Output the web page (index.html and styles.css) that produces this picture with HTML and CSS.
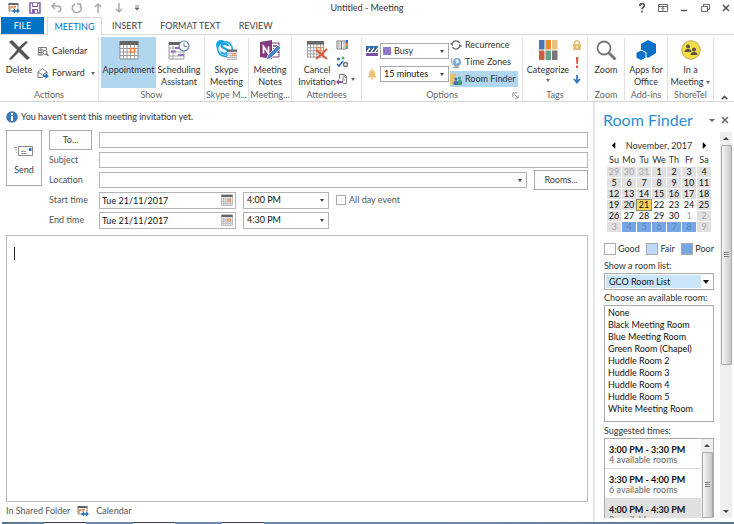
FILE: index.html
```html
<!DOCTYPE html>
<html lang="en">
<head>
<meta charset="utf-8">
<title>Untitled - Meeting</title>
<link rel="stylesheet" href="styles.css">
</head>
<body>
<svg class="defs" aria-hidden="true">
  <symbol id="cal" viewBox="0 0 20 20">
    <path d="M1 4h18v15H1z" fill="#fff" stroke="#8a8a8a"/>
    <path d="M1 8.500h18M1 12h18M1 15.500h18M4.500 4v15M8 4v15M11.500 4v15M15.500 4v15" stroke="#9a9a9a" fill="none"/>
    <path d="M.5 1h19v4H.5z" fill="#666"/>
    <path d="M11.500 8.500h4v3.500h-4z" fill="#fff" stroke="#e8833a" stroke-width="1.500"/>
  </symbol>
  <symbol id="calsync" viewBox="0 0 12 12">
    <path d="M1 2h9v7H1z" fill="#fff" stroke="#888"/>
    <path d="M.5 1h10v2H.5z" fill="#666"/>
    <path d="M2 8V5h3M6 7V4.500h2" stroke="#e8833a" stroke-width="1.300" fill="none"/>
    <path d="M4 9l3-2.500v1.700h2V6.500L12 9l-3 2.500V9.800H7v1.700z" fill="#2b72bd"/>
  </symbol>
  <symbol id="bigx" viewBox="0 0 22 20"><path d="M1 2l3-2 7 7 7-6 2 1-7 7 9 9-3 2-8-8-8 8-2-1 8-9z" fill="#555"/></symbol>
</svg>
<header class="titlebar">
  <div class="quick">
    <button aria-label="Calendar"><svg viewBox="0 0 12 12"><use href="#calsync"/></svg></button>
    <button aria-label="Save"><svg viewBox="0 0 12 12"><path d="M1 1h10v10H1z" fill="#fff" stroke="#8661b0" stroke-width="1.600"/><path d="M3 1h6v4H3zM3 7h6v4H3z" fill="#8661b0"/><path d="M4 1h4v3H4zM6 8h2v3H6z" fill="#fff"/></svg></button>
    <button aria-label="Undo"><svg viewBox="0 0 12 12"><path d="M5 1L2 4l3 3M2 4h5c5 0 5 5 1 6" fill="none" stroke="#aaa" stroke-width="1.500"/></svg></button>
    <button aria-label="Redo"><svg viewBox="0 0 12 12"><path d="M4 2a4.500 4.500 0 1 0 5 1M9.500 6V2H6" fill="none" stroke="#aaa" stroke-width="1.500"/></svg></button>
    <button aria-label="Previous"><svg viewBox="0 0 12 12"><path d="M6 11V2M3 5l3-3 3 3" fill="none" stroke="#aaa" stroke-width="1.500"/></svg></button>
    <button aria-label="Next"><svg viewBox="0 0 12 12"><path d="M6 1v9M3 7l3 3 3-3" fill="none" stroke="#aaa" stroke-width="1.500"/></svg></button>
    <button aria-label="Customize"><svg viewBox="0 0 12 12"><path d="M1 4h4M1 6h4L3 8z" fill="#666" stroke="#666" stroke-width=".8"/></svg></button>
  </div>
  <h1>Untitled - Meeting</h1>
  <div class="winbtns">
    <button aria-label="Help"><svg viewBox="0 0 12 12"><path d="M3.800 4c0-3 4.500-3 4.500-.4C8.300 5.500 6 5.300 6 7.500M6 8.800v1.700" fill="none" stroke="#555" stroke-width="1.700"/></svg></button>
    <button aria-label="Ribbon options"><svg viewBox="0 0 12 12"><path d="M1.500 2.500h9v7h-9zM1.500 4.500h9M6 9V5.500M4.500 7L6 5.500 7.500 7" fill="none" stroke="#666"/></svg></button>
    <button aria-label="Minimize"><svg viewBox="0 0 12 12"><path d="M3 8.500h6" stroke="#555" stroke-width="1.500"/></svg></button>
    <button aria-label="Restore"><svg viewBox="0 0 12 12"><path d="M2.500 4.500h6v5h-6zM4.500 4V2.500h6v5H9" fill="none" stroke="#666"/></svg></button>
    <button aria-label="Close"><svg viewBox="0 0 12 12"><path d="M3 3l6 6M9 3L3 9" stroke="#555" stroke-width="1.500"/></svg></button>
  </div>
</header>
<nav class="tabs">
  <a class="file" href="#file">FILE</a>
  <a class="active" href="#meeting">MEETING</a>
  <a class="insert" href="#insert">INSERT</a>
  <a href="#format">FORMAT TEXT</a>
  <a href="#review">REVIEW</a>
</nav>
<div class="ribbon">
  <section class="group">
    <div class="tools start">
      <button class="big"><svg viewBox="0 0 22 20"><use href="#bigx"/></svg>Delete</button>
      <div class="stack wide">
        <button class="small"><svg viewBox="0 0 12 12"><path d="M1.500 10V2.500h8V5M1.500 5h5M1.500 7.500h4M4 3v7M1 10h5" fill="none" stroke="#777"/><circle cx="8" cy="7.500" r="2" fill="#fff" stroke="#666"/><path d="M9.500 9l2 2" stroke="#666" stroke-width="1.300"/></svg>Calendar</button>
        <button class="small"><svg viewBox="0 0 12 12"><path d="M1 5l4.500-3.500L10 5v2M1 5v5.500h5M1 5l4.500 3L10 5" fill="none" stroke="#777"/><path d="M6 8h2.500V6L12 9l-3.500 3v-2H6z" fill="#2b72bd"/></svg>Forward<i class="caret push"></i></button>
      </div>
    </div>
    <h2>Actions</h2>
  </section>
  <section class="group">
    <div class="tools">
      <button class="big on"><svg viewBox="0 0 20 20"><use href="#cal"/></svg>Appointment</button>
      <button class="big even"><svg viewBox="0 0 22 20"><path d="M1 3h15v16H1z" fill="#fff" stroke="#999"/><path d="M1 2h12v3H1z" fill="#666"/><path d="M1 8h15M1 12h15M1 16h15M5 5v14" stroke="#aaa"/><path d="M7 8h6M3 11.500h5M10 15h6" stroke="#9673c8" stroke-width="2"/><circle cx="16" cy="6" r="5" fill="#fff" stroke="#6486ab" stroke-width="1.200"/><path d="M16 3v3.500h3" fill="none" stroke="#6486ab"/></svg>Scheduling<br>Assistant</button>
    </div>
    <h2>Show</h2>
  </section>
  <section class="group">
    <div class="tools">
      <button class="big"><svg viewBox="0 0 22 20"><circle cx="5" cy="5" r="5" fill="#13a4e2"/><circle cx="12" cy="13" r="5" fill="#13a4e2"/><circle cx="9" cy="9" r="8" fill="#13a4e2"/><circle cx="9" cy="9" r="6.500" fill="#fff"/><path d="M12 6c-1-3-7-2.500-6.500 0S12 8.500 12 11.500s-6 3-7 0" fill="none" stroke="#13a4e2" stroke-width="2.200"/><svg x="10" y="9" width="12" height="11" viewBox="0 0 20 20"><use href="#cal"/></svg></svg>Skype<br>Meeting</button>
    </div>
    <h2>Skype M...</h2>
  </section>
  <section class="group">
    <div class="tools">
      <button class="big"><svg viewBox="0 0 22 20"><path d="M11 3h9v14h-9z" fill="#fff" stroke="#80397b"/><path d="M14 6h6M14 9h6M14 12h6" stroke="#80397b" stroke-width="1.500"/><path d="M1 2l12-2v19L1 17z" fill="#80397b"/><path d="M4.500 13.500v-7l5 7v-7" fill="none" stroke="#fff" stroke-width="1.800"/><path d="M7 20l2-5 10-10 3 3-10 10z" fill="#4a86c5" stroke="#fff" stroke-width=".7"/></svg>Meeting<br>Notes</button>
    </div>
    <h2>Meeting...</h2>
  </section>
  <section class="group">
    <div class="tools">
      <button class="big"><svg viewBox="0 0 22 20"><svg width="19" height="18" viewBox="0 0 20 20"><use href="#cal"/></svg><path d="M10 10l11 9M21 9L10 19" stroke="#e0563a" stroke-width="2"/></svg>Cancel<br>Invitation</button>
      <div class="stack">
        <button class="small" aria-label="Address book"><svg viewBox="0 0 12 12"><path d="M1 2h4.500v8H1zM5.500 2H10v8H5.500z" fill="#fff" stroke="#777"/><path d="M2 4h2.500M2 6h2.500M2 8h2.500M7 4h2M7 6h2M7 8h2" stroke="#999"/><path d="M10 1h2v3h-2z" fill="#2b72bd"/><path d="M10 4h2v3h-2z" fill="#e8833a"/><path d="M10 7h2v3h-2z" fill="#5aa58a"/></svg></button>
        <button class="small" aria-label="Check names"><svg viewBox="0 0 12 12"><circle cx="2.500" cy="3" r="1.500" fill="#2b72bd"/><circle cx="7" cy="2" r="1.500" fill="#5aa58a"/><path d="M1 8l2 2 4-5" fill="none" stroke="#2b72bd" stroke-width="1.600"/><circle cx="9.500" cy="8.500" r="2" fill="#fff" stroke="#777" stroke-width="1.500"/></svg></button>
        <button class="small" aria-label="Response options"><svg viewBox="0 0 12 12"><path d="M3.500 6V1.500h5l2 2v7H7" fill="#fff" stroke="#777"/><path d="M8 1v3h3M6 5h2M6 7h3" fill="none" stroke="#777"/><path d="M0 9l3-3v2h4v2H3v2z" fill="#8a50a5"/></svg><i class="caret"></i></button>
      </div>
    </div>
    <h2>Attendees</h2>
  </section>
  <section class="group">
    <div class="tools options">
      <div class="stack">
        <div class="field"><svg viewBox="0 0 12 12"><path d="M0 1h12v2H0z" fill="#2b72bd"/><path d="M0 3h12v4H0z" fill="#3d5a80"/><path d="M1 7l3-4M5 7l3-4M9 7l3-4" stroke="#fff" stroke-width="1.300"/><path d="M0 8h12v3H0z" fill="#7c52a5"/></svg><span class="pick busy"><select aria-label="Show as"><option>Busy</option></select></span></div>
        <div class="field"><svg viewBox="0 0 12 12"><path d="M1 9.500l2-2V5c0-4 6-4 6 0v2.500l2 2zM5 10h2v1.500H5zM5.500 0h1v2h-1z" fill="#ecc277"/></svg><span class="pick dark"><select aria-label="Reminder"><option>15 minutes</option></select></span></div>
      </div>
      <div class="stack">
        <button class="small"><svg viewBox="0 0 12 12"><path d="M2.500 4a4 4 0 0 1 7 0M9.500 8a4 4 0 0 1-7 0" fill="none" stroke="#666" stroke-width="1.300"/><path d="M0 5l3-2v4zM12 7L9 9V5z" fill="#666"/></svg>Recurrence</button>
        <button class="small"><svg viewBox="0 0 12 12"><circle cx="7" cy="6" r="4" fill="#79a9d6"/><path d="M5 4l3-1 1 3-2 2z" fill="#e8eff5"/><path d="M2 2c-2 5 1 9 7 8M6 10v2M3 11.500h6" fill="none" stroke="#999"/></svg>Time Zones</button>
        <button class="small on"><svg viewBox="0 0 12 12"><path d="M0 1l6-1v12l-6-1z" fill="#edc06d"/><circle cx="6" cy="6" r="1.600" fill="#3a78b5"/><path d="M3.500 12V9q2.500-3 5 0v3z" fill="#3a78b5"/><circle cx="9.500" cy="5" r="1.600" fill="#4d9c80"/><path d="M8 12V8q2-3 4 0v4z" fill="#4d9c80"/></svg>Room Finder</button>
      </div>
    </div>
    <h2>Options<svg class="launch" viewBox="0 0 8 8"><path d="M1 6V1h5M3 3l3 3M7 4v3H4" fill="none" stroke="#777"/></svg></h2>
  </section>
  <section class="group">
    <div class="tools">
      <button class="big"><svg viewBox="0 0 20 20"><path d="M1 0h5.500v9.500H1z" fill="#4477b5"/><path d="M7.500 0H13v9.500H7.500z" fill="#e98733"/><path d="M14 0h5.500v9.500H14z" fill="#e9c07c"/><path d="M1 10.500h5.500V20H1z" fill="#d05a43"/><path d="M7.500 10.500H13V20H7.500z" fill="#61a48a"/><path d="M14 10.500h5.500V20H14z" fill="#777"/></svg>Categorize<i class="caret below"></i></button>
      <div class="stack gap">
        <button class="small" aria-label="Private"><svg viewBox="0 0 12 12"><path d="M3.500 5V3.500q2.500-4 5 0V5" fill="none" stroke="#e9bd72" stroke-width="1.500"/><path d="M2 5h8v6H2z" fill="#e9bd72"/><path d="M5.500 7h1v2h-1z" fill="#fff"/></svg></button>
        <button class="small" aria-label="High importance"><svg viewBox="0 0 12 12"><path d="M4.800 1h2.600L6.800 8H5.400zM5 9.500h2V12H5z" fill="#e0563a"/></svg></button>
        <button class="small" aria-label="Low importance"><svg viewBox="0 0 12 12"><path d="M6 2v7M3 6l3 3.500L9 6" fill="none" stroke="#3a78bd" stroke-width="1.800"/></svg></button>
      </div>
    </div>
    <h2>Tags</h2>
  </section>
  <section class="group">
    <div class="tools"><button class="big"><svg viewBox="0 0 20 20"><circle cx="8" cy="8" r="6.500" fill="#fff" stroke="#777" stroke-width="1.800"/><path d="M12.500 12.500l7 7" stroke="#777" stroke-width="3"/></svg>Zoom</button></div>
    <h2>Zoom</h2>
  </section>
  <section class="group">
    <div class="tools"><button class="big"><svg viewBox="0 0 20 20"><path d="M12 0l8 4v9l-8 5-7-5V4z" fill="#0b71c8"/><path d="M5 10l5 2.500V18l-5 2.500L0 18v-5.500z" fill="#0b71c8" stroke="#fff"/></svg>Apps for<br>Office</button></div>
    <h2>Add-ins</h2>
  </section>
  <section class="group">
    <div class="tools"><button class="big"><svg viewBox="0 0 20 20"><circle cx="10" cy="10" r="9.300" fill="#f3dc45" stroke="#b9a95b"/><circle cx="7" cy="6.500" r="2" fill="#594f4c"/><path d="M3.500 12q0-3 3.500-3t3.500 3z" fill="#594f4c"/><circle cx="13" cy="9.500" r="2" fill="#594f4c"/><path d="M9.500 15q0-3 3.500-3t3.500 3z" fill="#594f4c"/></svg>In a<br><span class="inline">Meeting<i class="caret"></i></span></button></div>
    <h2>ShoreTel</h2>
  </section>
  <button class="collapse" aria-label="Collapse ribbon"><svg viewBox="0 0 8 8"><path d="M1.500 5.500L4 3l2.500 2.500" fill="none" stroke="#555" stroke-width="1.400"/></svg></button>
</div>
<div class="content">
  <main class="editor">
    <p class="info"><svg viewBox="0 0 12 12"><circle cx="6" cy="6" r="5.800" fill="#3f78b5"/><path d="M5 2h2v2H5zM5 5h2v5H5z" fill="#fff"/></svg>You haven't sent this meeting invitation yet.</p>
    <form class="form">
      <button type="button" class="btn send"><svg viewBox="0 0 20 12"><path d="M4.500 1.500h14v9h-14z" fill="#fff" stroke="#888"/><path d="M0 2.500h3M1 5h2M2 7.500h1M7 6.500h5M7 8.500h6" stroke="#999"/><path d="M15 3h2.500v3H15z" fill="#2b72bd"/></svg>Send</button>
      <button type="button" class="btn to">To...</button>
      <input aria-label="To" class="box" type="text">
      <label for="subject">Subject</label>
      <input id="subject" class="box" type="text">
      <label for="location">Location</label>
      <div class="row"><span class="pick grow"><input id="location" type="text"></span><button type="button" class="btn rooms">Rooms...</button></div>
      <label for="sd">Start time</label>
      <div class="row">
        <span class="date"><input id="sd" type="text" value="Tue 21/11/2017"><svg viewBox="0 0 20 20"><use href="#cal"/></svg></span>
        <span class="pick time"><select aria-label="Start hour"><option>4:00 PM</option></select></span>
        <input id="allday" type="checkbox"><label for="allday">All day event</label>
      </div>
      <label for="ed">End time</label>
      <div class="row">
        <span class="date"><input id="ed" type="text" value="Tue 21/11/2017"><svg viewBox="0 0 20 20"><use href="#cal"/></svg></span>
        <span class="pick time"><select aria-label="End hour"><option>4:30 PM</option></select></span>
      </div>
    </form>
    <div class="message"><textarea aria-label="Message"></textarea><i class="cursor"></i></div>
    <footer>In Shared Folder<svg viewBox="0 0 12 12"><use href="#calsync"/></svg>Calendar</footer>
  </main>
  <aside class="pane">
    <div class="panehead"><h2>Room Finder</h2><i class="caret"></i><button aria-label="Close pane"><svg viewBox="0 0 8 8"><path d="M1 1l6 6M7 1L1 7" stroke="#666" stroke-width="1.500"/></svg></button></div>
    <div class="panebody">
      <div class="finder">
        <div class="month"><button aria-label="Previous month"><svg viewBox="0 0 8 8"><path d="M6 0v8L2 4z"/></svg></button><span>November, 2017</span><button aria-label="Next month"><svg viewBox="0 0 8 8"><path d="M2 0v8l4-4z"/></svg></button></div>
        <table>
          <thead><tr><th>Su</th><th>Mo</th><th>Tu</th><th>We</th><th>Th</th><th>Fr</th><th>Sa</th></tr></thead>
          <tbody>
            <tr class="past"><td class="out">29</td><td class="out">30</td><td class="out">31</td><td>1</td><td>2</td><td>3</td><td>4</td></tr>
            <tr class="past"><td>5</td><td>6</td><td>7</td><td>8</td><td>9</td><td>10</td><td>11</td></tr>
            <tr class="past"><td>12</td><td>13</td><td>14</td><td>15</td><td>16</td><td>17</td><td>18</td></tr>
            <tr><td class="off">19</td><td class="off">20</td><td class="today">21</td><td>22</td><td>23</td><td>24</td><td class="off">25</td></tr>
            <tr><td class="off">26</td><td>27</td><td>28</td><td>29</td><td>30</td><td class="out">1</td><td class="off out">2</td></tr>
            <tr><td class="off out">3</td><td class="poor">4</td><td class="poor">5</td><td class="poor">6</td><td class="poor">7</td><td class="poor">8</td><td class="off out">9</td></tr>
          </tbody>
        </table>
        <div class="legend"><span><i></i>Good</span><span><i class="fair"></i>Fair</span><span><i class="bad"></i>Poor</span></div>
        <label for="list">Show a room list:</label>
        <span class="pick roomlist"><select id="list"><option>GCO Room List</option></select></span>
        <label for="rooms">Choose an available room:</label>
        <select id="rooms" class="listbox" size="9"><option>None</option><option>Black Meeting Room</option><option>Blue Meeting Room</option><option>Green Room (Chapel)</option><option>Huddle Room 2</option><option>Huddle Room 3</option><option>Huddle Room 4</option><option>Huddle Room 5</option><option>White Meeting Room</option></select>
        <h3>Suggested times:</h3>
        <div class="suggest">
          <ul>
            <li><b>3:00 PM - 3:30 PM</b>4 available rooms</li>
            <li><b>3:30 PM - 4:00 PM</b>6 available rooms</li>
            <li class="sel"><b>4:00 PM - 4:30 PM</b>9 available rooms</li>
          </ul>
          <div class="scroll"><i class="up"></i><i class="thumb"></i></div>
        </div>
      </div>
      <div class="scroll outer"><i class="up"></i><i class="thumb"></i><i class="down"></i></div>
    </div>
  </aside>
</div>
<div class="taskbar"><i></i><i></i><i></i></div>
</body>
</html>
```

FILE: styles.css
```css
* { box-sizing: border-box; }
body {
  margin: 0;
  height: 100vh;
  display: flex;
  flex-direction: column;
  overflow: hidden;
  background: #fff;
  color: #333;
  font: 9px/12px Lato, "Open Sans", sans-serif;
}
button, input, select, textarea { font: inherit; color: inherit; margin: 0; padding: 0; border: 0; background: none; }
button { display: flex; align-items: center; }
select, input[type="checkbox"] { appearance: none; }
select, input[type="text"] { width: 100%; height: 100%; min-width: 0; }
h1, h2, h3, p, ul { margin: 0; padding: 0; font: inherit; list-style: none; }
svg { display: block; flex: none; }
.defs { position: absolute; width: 0; height: 0; }
.caret { width: 0; height: 0; border: 2px solid transparent; border-top: 3px solid #666; border-bottom: 0; flex: none; }

.titlebar { display: grid; grid-template-columns: 1fr auto 1fr; align-items: center; height: 17px; flex: none; padding-bottom: 2px; }
.titlebar svg { width: 12px; height: 12px; }
.titlebar h1 { font-size: 9px; }
.quick { display: flex; gap: 9px; padding-left: 8px; }
.winbtns { display: flex; gap: 9px; justify-content: flex-end; padding-right: 2px; }

.tabs { display: flex; height: 18px; flex: none; align-items: stretch; border-bottom: 1px solid #d9d9d9; line-height: 18px; gap: 18px; padding-left: 1px; }
.tabs a { color: #444; text-decoration: none; }
.tabs .file { width: 43px; background: #0072c6; color: #fff; text-align: center; margin-right: -15px; }
.tabs .active { width: 55px; height: 18px; background: #fff; border: 1px solid #d9d9d9; border-bottom: 0; color: #0072c6; text-align: center; }
.tabs .insert { margin-left: -8px; }

.ribbon { display: grid; grid-template-columns: 99fr 106fr 44fr 43fr 70fr 161fr 65fr 37fr 43fr 46fr 20fr; height: 67px; flex: none; border-bottom: 1px solid #d4d4d4; padding: 2px 0 0; }
.group { display: flex; flex-direction: column; border-right: 1px solid #e1e1e1; min-width: 0; }
.group h2 { display: flex; justify-content: center; position: relative; color: #666; line-height: 14px; height: 14px; white-space: nowrap; }
.launch { position: absolute; right: 3px; top: 4px; width: 7px; height: 7px; }
.tools { display: flex; flex: 1; justify-content: center; min-height: 0; }
.tools.start { justify-content: flex-start; padding-left: 4px; }
.big { flex-direction: column; min-width: 30px; padding-top: 3px; line-height: 12px; white-space: nowrap; }
.big > svg { width: 22px; height: 20px; margin-bottom: 4px; }
.on { background: #b1d6f0; }
.big.on { width: 55px; }
.even { width: 46px; }
.below { margin-top: 3px; }
.inline { display: flex; align-items: center; gap: 3px; }
.stack { display: flex; flex-direction: column; gap: 1px; }
.gap { margin-left: 2px; }
.grow { flex: 1; }
.stack.wide { gap: 6px; padding: 6px 0 0 3px; flex: 1; }
.small { height: 16px; gap: 3px; white-space: nowrap; }
.small svg { width: 12px; height: 12px; }
.wide .push { margin-left: 3px; }
.options { gap: 1px; padding: 0 4px; justify-content: flex-start; }
.options .stack:first-child { gap: 7px; padding-top: 6px; }
.options .stack:last-child { width: 70px; }
.field { display: flex; align-items: center; gap: 2px; }
.field svg { width: 12px; height: 12px; }
.field .pick { width: 69px; }
.collapse { align-self: end; justify-content: center; }
.collapse svg { width: 9px; height: 9px; }

.pick { position: relative; display: block; height: 16px; border: 1px solid #ababab; background: #fff; }
.pick::after { content: ""; position: absolute; right: 4px; top: 6px; border: 2px solid transparent; border-top: 3px solid #444; border-bottom: 0; }
.pick select { display: block; padding: 0 3px; line-height: 14px; }
.dark { color: #111; }
.busy { background: linear-gradient(#9378cf, #9378cf) 2px 3px / 8px 8px no-repeat; }
.busy select { padding-left: 13px; }

.content { display: flex; flex: 1; min-height: 0; }
.editor { flex: 1; min-width: 0; display: flex; flex-direction: column; padding: 7px 5px 5px 6px; }
.info { display: flex; align-items: center; gap: 3px; height: 16px; margin-bottom: 5px; }
.info svg { width: 12px; height: 12px; }
.form { display: grid; grid-template-columns: 36px 43px 1fr; grid-auto-rows: 20px; column-gap: 7px; align-items: center; color: #555; }
.form > label { grid-column: 2; white-space: nowrap; }
.btn { border: 1px solid #ababab; background: #fdfdfd; justify-content: center; color: #444; height: 20px; }
.send { grid-row: 1 / 4; height: 56px; flex-direction: column; gap: 7px; align-self: start; padding-top: 4px; }
.send svg { width: 20px; height: 12px; }
.box, .form .pick { border: 1px solid #b4b4b4; }
.form input.box { height: 16px; }
.row { display: flex; align-items: center; gap: 7px; }
.rooms { width: 54px; }
.date { display: flex; align-items: center; width: 137px; height: 17px; border: 1px solid #b4b4b4; padding: 0 2px 0 2px; color: #111; }
.date svg { width: 12px; height: 12px; }
.time { width: 86px; height: 17px; color: #111; }
input[type="checkbox"] { width: 10px; height: 10px; border: 1px solid #ababab; }
.row label { margin-left: -4px; }
.message { position: relative; flex: 1; margin-top: 5px; border: 1px solid #b8bcc4; }
.message textarea { display: block; width: 100%; height: 100%; resize: none; padding: 11px 8px; }
.cursor { position: absolute; left: 7px; top: 11px; width: 1px; height: 13px; background: #222; }
footer { display: flex; align-items: center; gap: 7px; padding-top: 3px; color: #555; }
footer svg { width: 12px; height: 12px; }

.pane { width: 141px; flex: none; display: flex; flex-direction: column; border-left: 2px solid #e6e6e6; padding: 6px 2px 4px 8px; }
.panehead { display: flex; align-items: center; height: 24px; }
.panehead h2 { flex: 1; font-size: 16px; line-height: 24px; color: #2a8dd4; white-space: nowrap; }
.panehead .caret { border-width: 3px 3px 0; margin-right: 6px; }
.panehead svg { width: 8px; height: 8px; margin-right: 3px; }
.panebody { display: flex; flex: 1; min-height: 0; gap: 6px; }
.finder { flex: 1; min-width: 0; display: flex; flex-direction: column; padding-left: 1px; }
.month { display: flex; align-items: center; justify-content: center; gap: 9px; height: 15px; margin-top: 6px; flex: none; }
.month svg { width: 7px; height: 7px; }
table { border-collapse: separate; border-spacing: 1px; table-layout: fixed; width: 106px; margin-left: 2px; }
th, td { padding: 0; height: 10px; line-height: 10px; font-weight: 400; text-align: center; }
th { height: 12px; }
td { color: #111; }
.past td, .off { background: #e0e0e0; }
td.out { color: #aaa; }
td.today { background: #fbd35e; outline: 1px solid #8b8b62; }
td.poor { background: #78a5e4; color: #5b87c5; }
.legend { display: flex; justify-content: space-between; margin: 9px 0 5px; height: 13px; flex: none; }
.legend span { display: flex; align-items: center; gap: 2px; }
.legend i { width: 12px; height: 12px; border: 1px solid #aaa; }
.legend .fair { background: #bddafc; }
.legend .bad { background: #78a5e4; }
.finder > label, .finder h3 { white-space: nowrap; flex: none; }
.roomlist { height: 17px; margin: 1px 0 2px; color: #111; flex: none; }
.roomlist select { width: 95px; margin: 1px; height: 13px; line-height: 13px; background: #cae4f8; }
.roomlist::after { border-width: 4px 3px 0; border-top-color: #111; }
.listbox { flex: none; height: 117px; border: 1px solid #ababab; overflow: hidden; border-radius: 0; color: #111; padding-top: 1px; margin-top: 1px; }
.listbox option { padding: 0 3px; min-height: 12px; line-height: 12px; }
.finder h3 { margin: 3px 0 1px; }
.suggest { display: flex; flex: 1; min-height: 0; border: 1px solid #ababab; border-bottom: 0; overflow: hidden; }
.suggest ul { flex: 1; }
.suggest li { height: 30px; padding: 6px 4px 0; line-height: 10px; color: #666; border-bottom: 1px solid #ddd; white-space: nowrap; }
.suggest b { display: block; color: #111; }
.suggest .sel { background: #e0e0e0; }
.scroll { width: 12px; display: flex; flex-direction: column; align-items: center; background: #efefef; flex: none; }
.scroll .up { border: 3px solid transparent; border-top: 0; border-bottom: 3px solid #444; margin: 5px 0; }
.scroll .down { border: 3px solid transparent; border-bottom: 0; border-top: 3px solid #444; margin: auto 0 5px; }
.scroll .thumb { position: relative; width: 11px; flex: 1; border: 1px solid #aaa; border-radius: 1px; background: linear-gradient(90deg, #f5f5f5, #c9c9cb); }
.scroll .thumb::after { content: ""; position: absolute; left: 2px; top: calc(50% - 3px); width: 5px; height: 5px; background: repeating-linear-gradient(#777 0 1px, #eee 1px 2px); }
.outer .thumb { flex: none; height: 57%; }
.taskbar { display: flex; gap: 47px; height: 2px; flex: none; margin-left: 2px; padding-left: 42px; background: linear-gradient(90deg, #567792, #6b8db5 84px 60%, #567792); }
.taskbar i { width: 42px; background: #eee; border-top: 1px solid #445; }
```
